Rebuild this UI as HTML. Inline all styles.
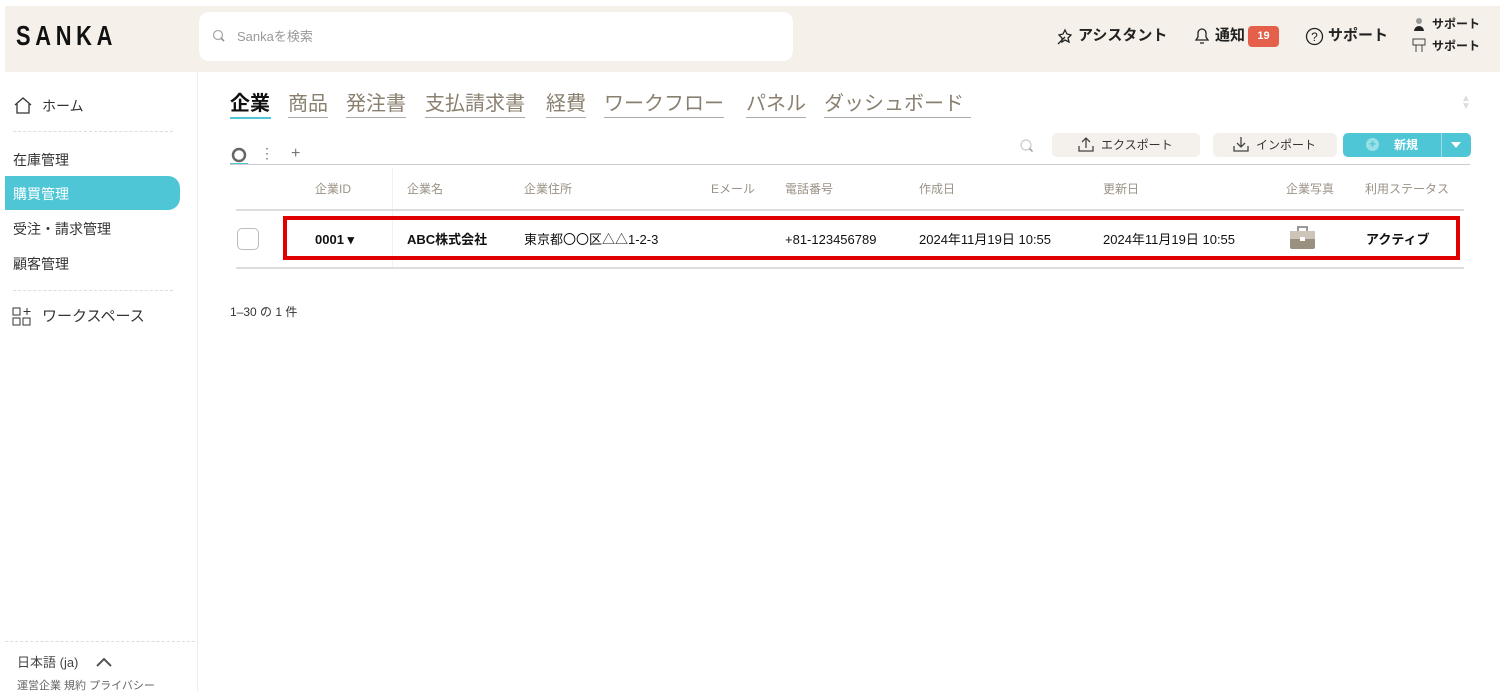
<!DOCTYPE html>
<html><head><meta charset="utf-8"><style>
*{margin:0;padding:0;box-sizing:border-box}
body{width:1500px;height:692px;background:#fff;font-family:"Liberation Sans","Noto Sans CJK JP",sans-serif;position:relative;overflow:hidden;color:#222}
.a{position:absolute;white-space:nowrap}
.hdr{left:5px;top:6px;width:1495px;height:66px;background:#f5f1ea}
.logo{left:16px;top:20px;font-size:28px;letter-spacing:6px;font-weight:bold;color:#111;transform:scaleX(.78);transform-origin:left;line-height:32px}
.search{left:199px;top:12px;width:594px;height:49px;background:#fff;border-radius:10px}
.hn{font-size:15px;font-weight:bold;color:#222;line-height:20px}
.side{left:197px;top:72px;width:1px;height:620px;background:#eee}
.si{font-size:14px;color:#333;left:13px;line-height:18px}
.dot{border-top:1px dashed #ddd;height:0}
.tab{font-size:20px;color:#8a8070;top:91px;border-bottom:1px solid #aaa;line-height:26px}
.th{font-size:12px;color:#9a9285;top:181px;line-height:16px}
.td{font-size:13px;color:#111;top:232px;line-height:16px}
.btn{background:#f4f1ec;border-radius:5px;height:24px;top:133px;font-size:12px;color:#333;text-align:center;line-height:24px}
</style></head><body>
<div class="a hdr"></div>
<div class="a logo">SANKA</div>
<div class="a search"></div>
<svg class="a" style="left:212px;top:29px" width="14" height="14" viewBox="0 0 14 14"><circle cx="6" cy="6" r="4.5" fill="none" stroke="#aaa" stroke-width="1.3"/><path d="M9 9l3 3" stroke="#888" stroke-width="1.5"/></svg>
<div class="a" style="left:237px;top:29px;font-size:13px;color:#999;line-height:16px">Sankaを検索</div>
<svg class="a" style="left:1056px;top:27px" width="18" height="18" viewBox="0 0 18 18"><path d="M2 17l7-7M9 3l2 4 4 1-3 3 1 4-4-2-3 2 0-4-3-3 4-1z" fill="none" stroke="#222" stroke-width="1.3"/></svg>
<div class="a hn" style="left:1078px;top:26px">アシスタント</div>
<svg class="a" style="left:1193px;top:26px" width="18" height="20" viewBox="0 0 18 20"><path d="M3 14h12l-2-3V7a4 4 0 0 0-8 0v4z M7 17h4" fill="none" stroke="#222" stroke-width="1.3"/></svg>
<div class="a hn" style="left:1215px;top:26px">通知</div>
<div class="a" style="left:1248px;top:26px;width:31px;height:21px;background:#e5604a;border-radius:4px;color:#fff;font-size:11px;font-weight:bold;text-align:center;line-height:21px">19</div>
<svg class="a" style="left:1305px;top:27px" width="19" height="19" viewBox="0 0 19 19"><circle cx="9.5" cy="9.5" r="8" fill="none" stroke="#222" stroke-width="1.3"/><text x="9.5" y="14" font-size="12" text-anchor="middle" fill="#222" font-family="Liberation Sans">?</text></svg>
<div class="a hn" style="left:1328px;top:26px">サポート</div>
<svg class="a" style="left:1412px;top:17px" width="14" height="37" viewBox="0 0 14 37"><circle cx="7" cy="4" r="3" fill="#999"/><path d="M2 14a5 5 0 0 1 10 0z" fill="#222"/><rect x="1" y="22" width="12" height="6" fill="none" stroke="#444"/><path d="M4 28v7M10 28v7" stroke="#444"/></svg>
<div class="a" style="left:1432px;top:16px;font-size:12px;font-weight:bold;line-height:16px">サポート</div>
<div class="a" style="left:1432px;top:38px;font-size:12px;font-weight:bold;line-height:16px">サポート</div>

<div class="a side"></div>
<svg class="a" style="left:13px;top:96px" width="20" height="18" viewBox="0 0 20 18"><path d="M2 9L10 2l8 7M4 8v9h12V8" fill="none" stroke="#333" stroke-width="1.3"/></svg>
<div class="a si" style="left:42px;top:97px">ホーム</div>
<div class="a dot" style="left:13px;top:131px;width:160px"></div>
<div class="a si" style="top:151px">在庫管理</div>
<div class="a" style="left:5px;top:176px;width:175px;height:34px;background:#4fc6d6;border-radius:0 12px 12px 0"></div>
<div class="a si" style="top:185px;color:#fff">購買管理</div>
<div class="a si" style="top:220px">受注・請求管理</div>
<div class="a si" style="top:255px">顧客管理</div>
<div class="a dot" style="left:13px;top:290px;width:160px"></div>
<svg class="a" style="left:12px;top:307px" width="22" height="20" viewBox="0 0 22 20"><rect x="1" y="1" width="7" height="7" fill="none" stroke="#333"/><rect x="1" y="11" width="7" height="7" fill="none" stroke="#333"/><rect x="11" y="11" width="7" height="7" fill="none" stroke="#333"/><path d="M15 1v7M11.5 4.5h7" stroke="#333"/></svg>
<div class="a" style="left:42px;top:308px;font-size:15px;color:#333;line-height:18px">ワークスペース</div>
<div class="a dot" style="left:5px;top:641px;width:190px"></div>
<div class="a" style="left:17px;top:655px;font-size:13px;color:#444;line-height:16px">日本語 (ja)</div>
<svg class="a" style="left:95px;top:656px" width="18" height="12" viewBox="0 0 18 12"><path d="M2 10l7-7 7 7" fill="none" stroke="#555" stroke-width="2"/></svg>
<div class="a" style="left:17px;top:679px;font-size:11px;color:#666;line-height:14px">運営企業 規約 プライバシー</div>

<div class="a" style="left:230px;top:91px;font-size:20px;color:#111;font-weight:bold;line-height:26px">企業</div>
<div class="a" style="left:230px;top:117px;width:41px;height:2px;background:#4fc6d6"></div>
<div class="a tab" style="left:288px">商品</div>
<div class="a tab" style="left:346px">発注書</div>
<div class="a tab" style="left:425px">支払請求書</div>
<div class="a tab" style="left:546px">経費</div>
<div class="a tab" style="left:604px">ワークフロー</div>
<div class="a tab" style="left:746px">パネル</div>
<div class="a tab" style="left:824px;width:147px">ダッシュボード</div>

<svg class="a" style="left:231px;top:147px" width="16" height="16"><circle cx="8" cy="8" r="6" fill="none" stroke="#666" stroke-width="2.5"/></svg>
<div class="a" style="left:230px;top:163px;width:18px;height:2px;background:#4fc6d6"></div>
<div class="a" style="left:260px;top:145px;font-size:14px;color:#777">⋮</div>
<div class="a" style="left:291px;top:145px;font-size:16px;color:#777">+</div>
<div class="a" style="left:230px;top:164px;width:1240px;height:1px;background:#ccc"></div>

<svg class="a" style="left:1019px;top:138px" width="16" height="16"><circle cx="7" cy="7" r="5" fill="none" stroke="#ccc" stroke-width="1.3"/><path d="M10.5 10.5l3 3" stroke="#999" stroke-width="1.5"/></svg>
<div class="a btn" style="left:1052px;width:148px"></div>
<svg class="a" style="left:1077px;top:136px" width="18" height="17" viewBox="0 0 18 17"><path d="M9 12V2M5 6l4-4 4 4M2 10v5h14v-5" fill="none" stroke="#444" stroke-width="1.3"/></svg>
<div class="a" style="left:1101px;top:137px;font-size:12px;color:#333;line-height:16px">エクスポート</div>
<div class="a btn" style="left:1213px;width:124px"></div>
<svg class="a" style="left:1232px;top:136px" width="18" height="17" viewBox="0 0 18 17"><path d="M9 1v10M5 7l4 4 4-4M2 10v5h14v-5" fill="none" stroke="#444" stroke-width="1.3"/></svg>
<div class="a" style="left:1256px;top:137px;font-size:12px;color:#333;line-height:16px">インポート</div>
<div class="a" style="left:1343px;top:133px;width:128px;height:24px;background:#4fc6d6;border-radius:5px"></div>
<div class="a" style="left:1441px;top:133px;width:1px;height:24px;background:#9adfe8"></div>
<div class="a" style="left:1366px;top:138px;width:13px;height:13px;border-radius:50%;background:#9adfe8;color:#4fc6d6;font-size:12px;line-height:13px;text-align:center;font-weight:bold">+</div>
<div class="a" style="left:1394px;top:137px;font-size:12px;color:#fff;font-weight:bold;line-height:16px">新規</div>
<div class="a" style="left:1451px;top:142px;border:5px solid transparent;border-top:6px solid #fff"></div>
<div class="a" style="left:1461px;top:95px;color:#ddd;font-size:10px;line-height:8px">▲<br>▼</div>

<div class="a th" style="left:315px">企業ID</div>
<div class="a" style="left:392px;top:168px;width:1px;height:100px;background:#f1f1f1"></div>
<div class="a th" style="left:407px">企業名</div>
<div class="a th" style="left:524px">企業住所</div>
<div class="a th" style="left:711px">Eメール</div>
<div class="a th" style="left:785px">電話番号</div>
<div class="a th" style="left:919px">作成日</div>
<div class="a th" style="left:1103px">更新日</div>
<div class="a th" style="left:1286px">企業写真</div>
<div class="a th" style="left:1365px">利用ステータス</div>
<div class="a" style="left:236px;top:209px;width:1228px;height:2px;background:#ddd"></div>
<div class="a" style="left:236px;top:267px;width:1228px;height:2px;background:#ddd"></div>
<div class="a" style="left:237px;top:228px;width:22px;height:22px;border:1px solid #bbb;border-radius:5px"></div>
<div class="a" style="left:283px;top:216px;width:1177px;height:44px;border:4px solid #e00000"></div>
<div class="a td" style="left:315px;font-weight:bold">0001 ▾</div>
<div class="a td" style="left:407px;font-weight:bold">ABC株式会社</div>
<div class="a td" style="left:524px">東京都〇〇区△△1-2-3</div>
<div class="a td" style="left:785px">+81-123456789</div>
<div class="a td" style="left:919px">2024年11月19日 10:55</div>
<div class="a td" style="left:1103px">2024年11月19日 10:55</div>
<svg class="a" style="left:1289px;top:226px" width="27" height="24" viewBox="0 0 27 24"><rect x="9" y="1" width="9" height="5" fill="none" stroke="#999" stroke-width="2"/><rect x="1" y="5" width="25" height="18" rx="2" fill="#9a9080"/><rect x="1" y="5" width="25" height="8" fill="#ccc5b8"/><rect x="11" y="11" width="5" height="4" fill="#fff"/></svg>
<div class="a td" style="left:1366px;font-weight:bold">アクティブ</div>
<div class="a" style="left:230px;top:304px;font-size:12px;color:#333;line-height:16px">1–30 の 1 件</div>
</body></html>
